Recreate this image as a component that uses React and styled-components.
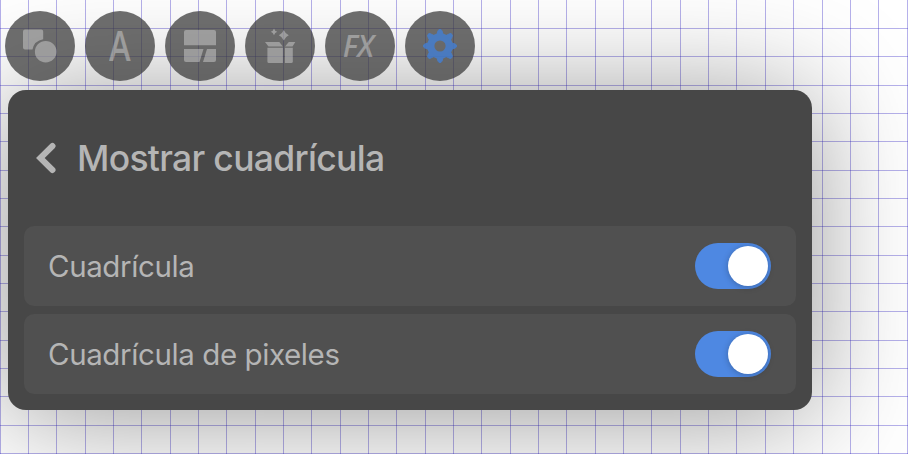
import React, { useState } from 'react'
import styled, { createGlobalStyle } from 'styled-components'

const Colors = {
  panel: '#474747',
  row: '#505050',
  text: '#b5b5b5',
  blue: '#4e88e2',
  grid: 'rgba(52, 40, 200, 0.36)'
}

const GRID_STEP = 28.345

const GlobalStyle = createGlobalStyle`
  body {
    margin: 0;
    overflow: hidden;
    background: #fff;
  }
  * {
    box-sizing: border-box;
  }
`

const Screen = styled.div`
  position: relative;
  width: 908px;
  height: 454px;
  overflow: hidden;
  padding: 11px 0 0 5px;
  font-family: Inter, "Liberation Sans", sans-serif;
`

const GridCanvas = styled.svg`
  position: absolute;
  left: 0;
  top: 0;
  z-index: 0;
`

const Toolbar = styled.div`
  position: relative;
  z-index: 2;
  display: flex;
  gap: 10px;
  height: 70px;
`

const ToolButton = styled.button`
  display: flex;
  align-items: center;
  justify-content: center;
  width: 70px;
  height: 70px;
  padding: 0;
  border: 0;
  border-radius: 50%;
  background: rgba(59, 59, 59, 0.74);
  color: rgba(255, 255, 255, 0.34);
`

const ToolIcon = styled.svg`
  display: block;
  width: 70px;
  height: 70px;
  fill: currentColor;
`

const Letter = styled.span`
  font-family: "Open Sans", sans-serif;
  font-size: 42px;
  font-weight: 600;
  line-height: 66px;
  padding-bottom: 2px;
  transform: scaleX(0.78);
`

const FxLabel = styled.span`
  font-family: "Open Sans", sans-serif;
  font-size: 31px;
  font-style: italic;
  font-weight: 600;
  line-height: 68px;
  letter-spacing: -0.5px;
  padding: 0 3px 2px 0;
  transform: scaleX(0.96);
`

const Panel = styled.section`
  position: relative;
  z-index: 1;
  width: 804px;
  height: 320px;
  margin: 9px 0 0 3px;
  padding: 0 16px 16px;
  border-radius: 18px;
  background: ${Colors.panel};
  box-shadow: 0 6px 116px rgba(0, 0, 0, 0.42);
`

const Header = styled.header`
  display: flex;
  align-items: center;
  gap: 21px;
  height: 136px;
  padding-left: 12px;
  color: ${Colors.text};
`

const BackIcon = styled.svg`
  width: 20px;
  height: 32px;
  fill: none;
  stroke: currentColor;
  stroke-width: 6;
  stroke-linecap: round;
  stroke-linejoin: miter;
`

const Title = styled.h1`
  margin: 0;
  padding-top: 2px;
  font-size: 35.5px;
  font-weight: 500;
  line-height: 44px;
  letter-spacing: -0.7px;
  white-space: nowrap;
`

const Rows = styled.div`
  display: flex;
  flex-direction: column;
  gap: 8px;
`

const Row = styled.div`
  display: flex;
  align-items: center;
  justify-content: space-between;
  height: 80px;
  padding: 0 25px 0 24px;
  border-radius: 10px;
  background: ${Colors.row};
`

const Label = styled.span`
  color: ${Colors.text};
  font-size: 29.5px;
  font-weight: 400;
  line-height: 40px;
  letter-spacing: -0.4px;
  white-space: nowrap;
`

const Switch = styled.button`
  display: flex;
  align-items: center;
  justify-content: ${props => props.$on ? 'flex-end' : 'flex-start'};
  width: 76px;
  height: 46px;
  padding: 0 3px;
  border: 0;
  border-radius: 23px;
  background: ${props => props.$on ? Colors.blue : '#6b6b6b'};
`

const Knob = styled.span`
  width: 40px;
  height: 40px;
  border-radius: 50%;
  background: #fff;
  box-shadow: 0 1px 6px rgba(0, 0, 0, 0.25);
`

function Grid () {
  const lines = Array.from({ length: 33 }, (_, i) => Math.floor(i * GRID_STEP))
  return (
    <GridCanvas width="908" height="454">
      {lines.map(x => <rect key={`v${x}`} x={x} y="0" width="1" height="454" fill={Colors.grid} />)}
      {lines.slice(1, 17).map(y => <rect key={`h${y}`} x="0" y={y} width="908" height="1" fill={Colors.grid} />)}
    </GridCanvas>
  )
}

function ShapesIcon () {
  return (
    <ToolIcon viewBox="0 0 70 70">
      <path d="M20 18.4h16.2a2 2 0 0 1 2 2v7.8a13 13 0 0 0-10.7 10.2H20a2 2 0 0 1-2-2v-16a2 2 0 0 1 2-2z" />
      <circle cx="40.7" cy="40.7" r="10.8" />
    </ToolIcon>
  )
}

function LayoutIcon () {
  return (
    <ToolIcon viewBox="0 0 70 70">
      <path d="M21 19h28a2 2 0 0 1 2 2v13.2H19V21a2 2 0 0 1 2-2z" />
      <path d="M19 38h19.5l-4 13H21a2 2 0 0 1-2-2z" />
      <path d="M42 38h9v11a2 2 0 0 1-2 2H38z" />
    </ToolIcon>
  )
}

function GiftIcon () {
  return (
    <ToolIcon viewBox="0 0 70 70">
      <path d="M29 17.4q.8 2.6 3.3 3.4q-2.5.8-3.3 3.4q-.8-2.6-3.3-3.4q2.5-.8 3.3-3.4z" />
      <path d="M38.8 19q1.5 3.8 5 5.3q-3.5 1.5-5 5.3q-1.5-3.8-5-5.3q3.5-1.5 5-5.3z" />
      <path d="M20 31h14.3l3.6 4.4H23.5z" />
      <path d="M43.8 31h6.5l-2.8 4.4H40z" />
      <path d="M22.4 36.8h15.5V52h-14a1.5 1.5 0 0 1-1.5-1.5z" />
      <path d="M39.9 36.8h7.9v13.7a1.5 1.5 0 0 1-1.5 1.5h-6.4z" />
    </ToolIcon>
  )
}

function GearIcon () {
  return (
    <ToolIcon viewBox="0 0 70 70">
      <g opacity="0.78" fill="none" stroke="#4280d8">
        <circle cx="35" cy="35" r="9.2" strokeWidth="7.2" />
        {[0, 45, 90, 135, 180, 225, 270, 315].map(angle => (
          <path
            key={angle}
            d="M31.5 24.5l1.5-4.6a2.1 2.1 0 0 1 4 0l1.5 4.6z"
            transform={`rotate(${angle} 35 35)`}
            fill="#4280d8"
            strokeWidth="1"
          />
        ))}
      </g>
    </ToolIcon>
  )
}

function Option ({ label }) {
  const [on, setOn] = useState(true)
  return (
    <Row>
      <Label>{label}</Label>
      <Switch $on={on} role="switch" aria-checked={on} onClick={() => setOn(!on)}>
        <Knob />
      </Switch>
    </Row>
  )
}

function App () {
  return (
    <Screen>
      <GlobalStyle />
      <Grid />
      <Toolbar>
        <ToolButton><ShapesIcon /></ToolButton>
        <ToolButton><Letter>A</Letter></ToolButton>
        <ToolButton><LayoutIcon /></ToolButton>
        <ToolButton><GiftIcon /></ToolButton>
        <ToolButton><FxLabel>FX</FxLabel></ToolButton>
        <ToolButton><GearIcon /></ToolButton>
      </Toolbar>
      <Panel>
        <Header>
          <BackIcon viewBox="0 0 20 32">
            <path d="M16.5 4L4.3 16l12.2 12" />
          </BackIcon>
          <Title>Mostrar cuadrícula</Title>
        </Header>
        <Rows>
          <Option label="Cuadrícula" />
          <Option label="Cuadrícula de pixeles" />
        </Rows>
      </Panel>
    </Screen>
  )
}

export default App
